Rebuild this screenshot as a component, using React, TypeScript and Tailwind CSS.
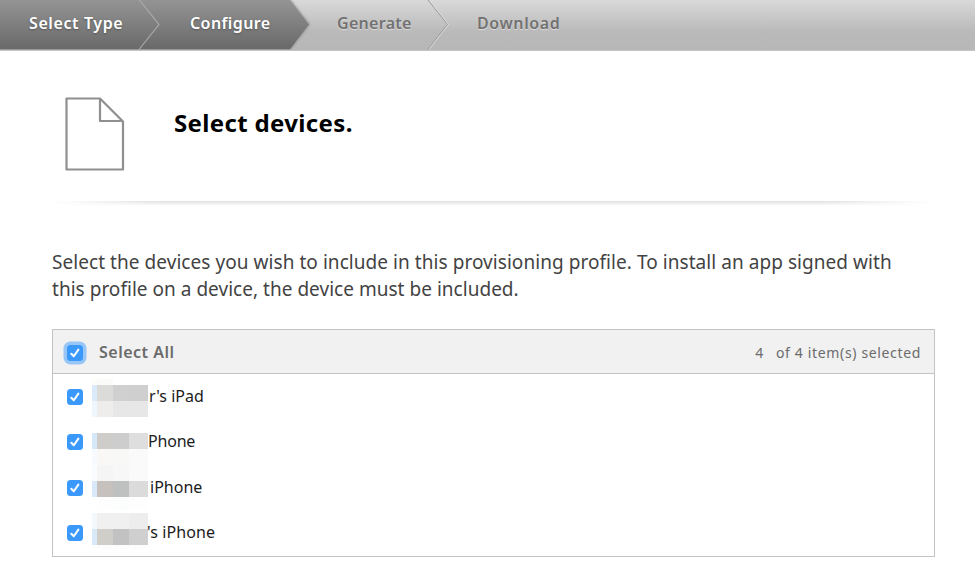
import React from "react";

type Block = { h: number; colors: string[] };
type Device = { label: string; pad: string; height: string; top: string; blocks: Block[] };

const devices: Device[] = [
  {
    label: "r's iPad", pad: "pl-px", height: "h-[45px]", top: "pt-[5px]",
    blocks: [
      { h: 6, colors: ["#fdfcf9", "#fbfbfa", "#ffffff", "#ffffff"] },
      { h: 16, colors: ["#dcebf9", "#dbdbd9", "#cfd0cf", "#cfcfcf"] },
      { h: 16, colors: ["#eef6fe", "#eeedec", "#e7e7e7", "#e7e7e7"] },
    ],
  },
  {
    label: "Phone", pad: "pl-0 tracking-[-0.2px]", height: "h-[46px]", top: "pt-[14px]",
    blocks: [
      { h: 16, colors: ["#d7e8f8", "#cfcdc9", "#cdcdce", "#dededf"] },
      { h: 16, colors: ["#f7fbff", "#f9f8f6", "#f8f8f7", "#fafafa"] },
    ],
  },
  {
    label: "iPhone", pad: "pl-[2px]", height: "h-[45px]", top: "pt-0",
    blocks: [
      { h: 16, colors: ["#fafcff", "#f5f5f5", "#f7f7f7", "#fafafa"] },
      { h: 16, colors: ["#d9e9f9", "#c7c1bd", "#bfc1c0", "#dbdbdb"] },
      { h: 13, colors: ["#ffffff", "#fefefe", "#fcfefd", "#fefefe"] },
    ],
  },
  {
    label: "'s iPhone", pad: "-ml-[1px] tracking-[0.1px]", height: "h-[45px]", top: "pt-[3px]",
    blocks: [
      { h: 16, colors: ["#f3f8fd", "#f0f0f0", "#f0f0f0", "#ededed"] },
      { h: 16, colors: ["#d9e9f7", "#cfcec9", "#c2c2c3", "#cfcfcf"] },
      { h: 4, colors: ["#fefefe", "#fcfcfc", "#fcfcfc", "#fcfcfc"] },
    ],
  },
];

function Check({ focused = false }: { focused?: boolean }) {
  return (
    <span
      className={
        "flex h-4 w-4 shrink-0 items-center justify-center rounded-[3.5px] bg-[#3b99fc] " +
        (focused ? "mt-px shadow-[0_0_0_3.5px_#98c6f6]" : "")
      }
    >
      <svg width="16" height="16" viewBox="0 0 16 16" fill="none">
        <path d="M4.3 8.7 L6.8 11.2 L11.4 4.6" stroke="white" strokeWidth="2" strokeLinecap="round" strokeLinejoin="round" />
      </svg>
    </span>
  );
}

function Mosaic({ blocks }: { blocks: Block[] }) {
  return (
    <div className="w-[56px]">
      {blocks.map((b, i) => (
        <div key={i} className="grid grid-cols-[5px_16px_16px_19px]" style={{ height: b.h }}>
          {b.colors.map((c, j) => (
            <span key={j} style={{ backgroundColor: c }} />
          ))}
        </div>
      ))}
    </div>
  );
}

function Steps() {
  return (
    <nav className="grid h-[51px] overflow-hidden border-b border-[#c4c4c4] bg-linear-to-b from-[#d9d9d9] via-[#b9b9b9] via-65% to-[#b7b7b7] text-[16px] leading-[47px] font-semibold">
      <svg className="col-start-1 row-start-1" width="975" height="50" fill="none">
        <defs>
          <linearGradient id="dark" x1="0" y1="0" x2="0" y2="1">
            <stop offset="0" stopColor="#949494" />
            <stop offset="1" stopColor="#696969" />
          </linearGradient>
          <filter id="soft" x="-5%" y="-5%" width="110%" height="110%">
            <feGaussianBlur stdDeviation="1" />
          </filter>
        </defs>
        <path d="M0 0H291L310 24.5L291 49H0Z" fill="#777" opacity=".6" filter="url(#soft)" />
        <path d="M0 0H290L308.800 24.500L290 49.200H0Z" fill="url(#dark)" />
        <path d="M139 -0.500L159 24.500L139 49.500" stroke="#a9a9a9" strokeWidth="1.2" />
        <path d="M428 0L447.500 24.500L428 49" stroke="#999" strokeWidth="1" />
        <path d="M429.200 0L448.700 24.500L429.200 49" stroke="#dadada" strokeWidth="1" />
      </svg>
      <div className="col-start-1 row-start-1 flex">
        <span className="w-[161px] pl-[29px] tracking-[0.6px] text-white [text-shadow:0_1px_2px_#555]">Select Type</span>
        <span className="w-[176px] pl-[29px] tracking-[0.4px] text-white [text-shadow:0_1px_2px_#555]">Configure</span>
        <span className="w-[140px] tracking-[0.3px] text-[#727272] [text-shadow:0_1px_1px_#ddd]">Generate</span>
        <span className="tracking-[0.6px] text-[#727272] [text-shadow:0_1px_1px_#ddd]">Download</span>
      </div>
    </nav>
  );
}

export default function App() {
  return (
    <div className="h-[577px] w-[975px] overflow-hidden bg-white font-['Noto_Sans','Open_Sans',sans-serif] whitespace-nowrap">
      <Steps />
      <main className="pl-[52px]">
        <header className="flex h-[150px] pt-[45px] pl-[12px]">
          <svg width="62" height="76" fill="none" stroke="#8f8f8f" strokeWidth="2.2" strokeLinejoin="round">
            <path d="M2.500 2.500H36L59 25.500V73.500H2.500Z" />
            <path d="M36 2.500V25H59" />
          </svg>
          <h1 className="ml-[48px] pt-[10px] text-[24px] leading-[34px] font-bold tracking-[0.35px] text-black">Select devices.</h1>
        </header>
        <div className="h-[5px] w-[880px] bg-linear-to-b from-[#e1e1e1] to-white [mask-image:linear-gradient(to_right,transparent,black_12%,black_88%,transparent)]" />
        <p className="mt-[43px] h-[80px] text-[19px] leading-[27px] text-[#434343]">
          <span className="block tracking-[0.055px]">Select the devices you wish to include in this provisioning profile. To install an app signed with</span>
          <span className="block tracking-[0.025px]">this profile on a device, the device must be included.</span>
        </p>
        <section className="h-[228px] w-[883px] border border-[#c3c3c3]">
          <div className="flex h-[44px] items-center border-b border-[#c3c3c3] bg-[#f1f1f1] pt-px pl-[14px] text-[#6b6b6b]">
            <Check focused />
            <span className="ml-4 text-[16px] font-semibold tracking-[0.5px]">Select All</span>
            <span className="ml-auto pt-px pr-[13px] text-[14px] tracking-[0.65px]">
              <span className="mr-[12px]">4</span>
              <span>of 4 item(s) selected</span>
            </span>
          </div>
          {devices.map((d) => (
            <div key={d.label} className={"flex pl-[14px] " + d.height}>
              <div className="flex w-[25px] items-center"><Check /></div>
              <div className={d.top}><Mosaic blocks={d.blocks} /></div>
              <span className={"text-[16px] leading-[45px] text-[#1c1c1c] " + d.pad}>{d.label}</span>
            </div>
          ))}
        </section>
      </main>
    </div>
  );
}
